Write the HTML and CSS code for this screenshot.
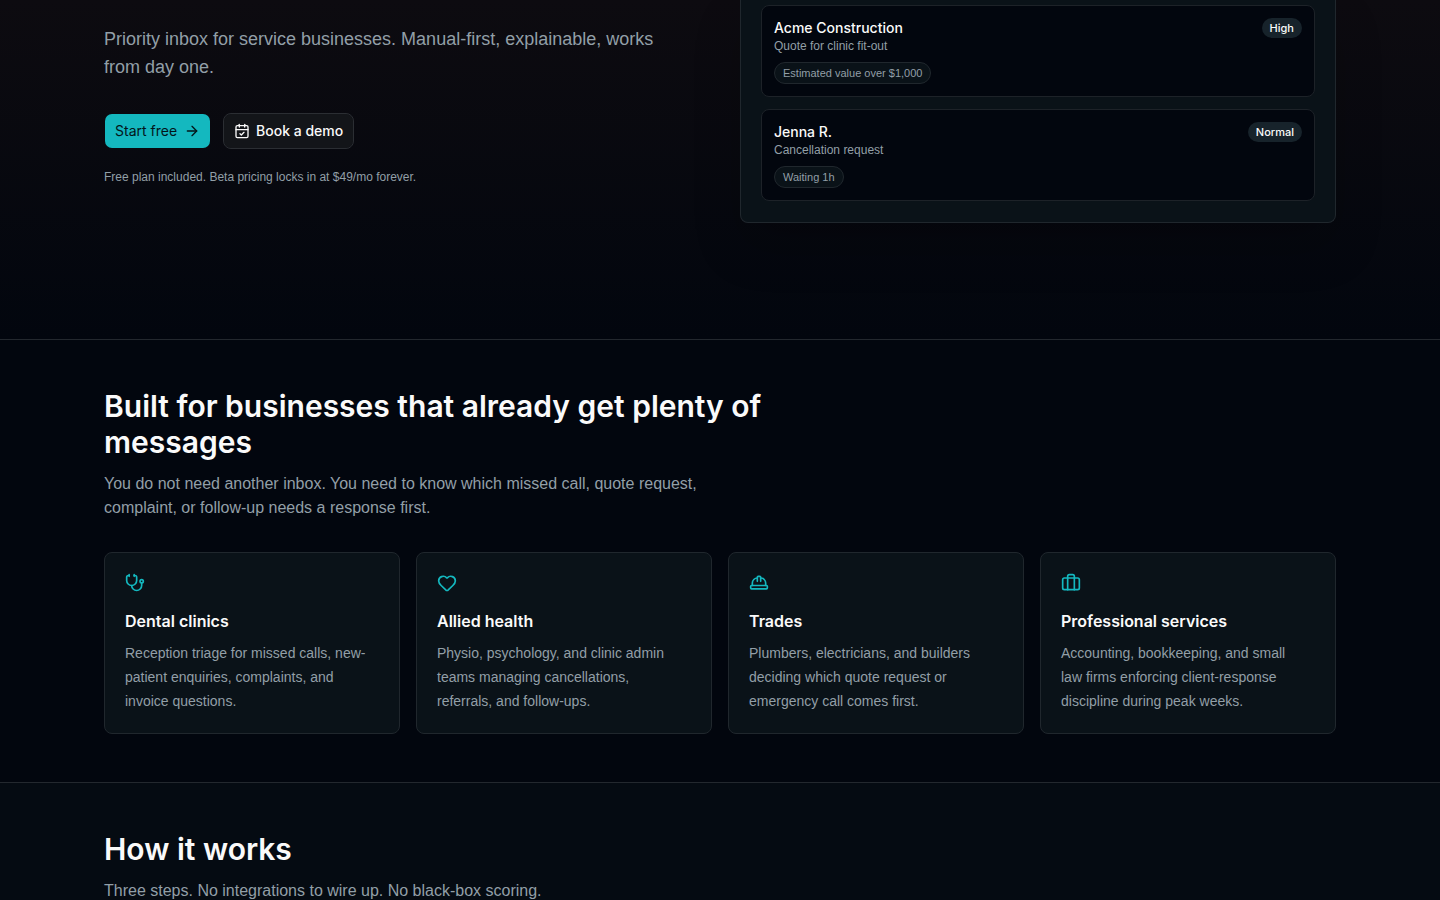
FILE: index.html
```html
<!DOCTYPE html>
<html lang="en">
<head>
  <meta charset="UTF-8">
  <meta name="viewport" content="width=device-width, initial-scale=1.0">
  <title>Priority inbox for service businesses</title>
  <link rel="stylesheet" href="styles.css">
</head>
<body>
  <!-- Hero -->
  <section class="hero">
    <div class="container hero-grid">
      <div class="hero-copy">
        <p class="hero-text">Priority inbox for service businesses. Manual-first, explainable, works from day one.</p>
        <div class="hero-actions">
          <a class="btn btn-primary" href="#">
            Start free
            <svg class="btn-icon" viewBox="0 0 24 24"><path d="M5 12h14"/><path d="m12 5 7 7-7 7"/></svg>
          </a>
          <a class="btn btn-outline" href="#">
            <svg class="btn-icon" viewBox="0 0 24 24"><path d="M8 2v4"/><path d="M16 2v4"/><rect width="18" height="18" x="3" y="4" rx="2"/><path d="M3 10h18"/><path d="m9 16 2 2 4-4"/></svg>
            Book a demo
          </a>
        </div>
        <p class="hero-note">Free plan included. Beta pricing locks in at $49/mo forever.</p>
      </div>

      <!-- Queue preview -->
      <div class="queue">
        <article class="queue-item">
          <div class="queue-head">
            <div>
              <p class="queue-name">Acme Construction</p>
              <p class="queue-subject">Quote for clinic fit-out</p>
            </div>
            <span class="badge">High</span>
          </div>
          <span class="reason">Estimated value over $1,000</span>
        </article>
        <article class="queue-item">
          <div class="queue-head">
            <div>
              <p class="queue-name">Jenna R.</p>
              <p class="queue-subject">Cancellation request</p>
            </div>
            <span class="badge">Normal</span>
          </div>
          <span class="reason">Waiting 1h</span>
        </article>
      </div>
    </div>
  </section>

  <!-- Industries -->
  <section class="section">
    <div class="container">
      <div class="section-intro">
        <h2>Built for businesses that already get plenty of messages</h2>
        <p>You do not need another inbox. You need to know which missed call, quote request, complaint, or follow-up needs a response first.</p>
      </div>
      <div class="card-grid">
        <article class="card">
          <svg class="card-icon" viewBox="0 0 24 24"><path d="M11 2v2"/><path d="M5 2v2"/><path d="M5 3H4a2 2 0 0 0-2 2v4a6 6 0 0 0 12 0V5a2 2 0 0 0-2-2h-1"/><path d="M8 15a6 6 0 0 0 12 0v-3"/><circle cx="20" cy="10" r="2"/></svg>
          <h3>Dental clinics</h3>
          <p>Reception triage for missed calls, new-patient enquiries, complaints, and invoice questions.</p>
        </article>
        <article class="card">
          <svg class="card-icon" viewBox="0 0 24 24"><path d="M2 9.5a5.5 5.5 0 0 1 9.591-3.676.56.56 0 0 0 .818 0A5.49 5.49 0 0 1 22 9.5c0 2.29-1.5 4-3 5.5l-5.492 5.313a2 2 0 0 1-3 .019L5 15c-1.5-1.5-3-3.2-3-5.5"/></svg>
          <h3>Allied health</h3>
          <p>Physio, psychology, and clinic admin teams managing cancellations, referrals, and follow-ups.</p>
        </article>
        <article class="card">
          <svg class="card-icon" viewBox="0 0 24 24"><path d="M10 10V5a1 1 0 0 1 1-1h2a1 1 0 0 1 1 1v5"/><path d="M14 6a6 6 0 0 1 6 6v3"/><path d="M4 15v-3a6 6 0 0 1 6-6"/><rect x="2" y="15" width="20" height="4" rx="1"/></svg>
          <h3>Trades</h3>
          <p>Plumbers, electricians, and builders deciding which quote request or emergency call comes first.</p>
        </article>
        <article class="card">
          <svg class="card-icon" viewBox="0 0 24 24"><path d="M16 20V4a2 2 0 0 0-2-2h-4a2 2 0 0 0-2 2v16"/><rect width="20" height="14" x="2" y="6" rx="2"/></svg>
          <h3>Professional services</h3>
          <p>Accounting, bookkeeping, and small law firms enforcing client-response discipline during peak weeks.</p>
        </article>
      </div>
    </div>
  </section>

  <!-- How it works -->
  <section class="section section-muted">
    <div class="container">
      <div class="section-intro">
        <h2>How it works</h2>
        <p>Three steps. No integrations to wire up. No black-box scoring.</p>
      </div>
    </div>
  </section>
</body>
</html>
```
FILE: styles.css
```css
/* Reset and Base Styles */
* {
  margin: 0;
  padding: 0;
  box-sizing: border-box;
}

body {
  background-color: #02060e;
  color: #fafafa;
  font-family: "Liberation Sans", Arial, sans-serif;
  font-size: 16px;
  line-height: 24px;
}

h2,
h3,
.btn,
.queue-name,
.badge {
  font-family: Inter, "Liberation Sans", sans-serif;
}

svg {
  fill: none;
  stroke: currentColor;
  stroke-width: 2;
  stroke-linecap: round;
  stroke-linejoin: round;
  flex-shrink: 0;
}

.container {
  max-width: 1280px;
  margin: 0 auto;
  padding: 0 24px;
}

/* Hero */
.hero {
  background: linear-gradient(to bottom, #0d0b10, #02060e);
  padding-bottom: 116px;
}

.hero-grid {
  display: grid;
  grid-template-columns: 1fr 1fr;
  gap: 40px;
}

.hero-copy {
  padding-top: 25px;
}

.hero-text {
  max-width: 576px;
  font-size: 18px;
  line-height: 28px;
  color: #929fa7;
}

.hero-actions {
  display: flex;
  flex-wrap: wrap;
  gap: 12px;
  margin-top: 32px;
}

.btn {
  display: inline-flex;
  align-items: center;
  gap: 6px;
  height: 36px;
  padding: 0 10px;
  border: 1px solid transparent;
  border-radius: 8px;
  background-clip: padding-box;
  font-size: 14px;
  font-weight: 500;
  text-decoration: none;
}

.btn-icon {
  width: 16px;
  height: 16px;
}

.btn-primary {
  gap: 7px;
  background-color: #14b8bf;
  color: #03161a;
  font-weight: 400;
}

.btn-outline {
  background-color: #131519;
  border-color: #2b2e33;
  color: #fafafa;
}

.hero-note {
  margin-top: 20px;
  font-size: 12px;
  line-height: 16px;
  color: #929fa7;
}

/* Queue preview */
.queue {
  display: flex;
  flex-direction: column;
  gap: 12px;
  padding: 5px 20px 21px;
  background: #0a1218;
  border: 1px solid #20272d;
  border-top: none;
  border-radius: 0 0 8px 8px;
  box-shadow: 0 24px 48px rgba(0, 0, 0, 0.2);
}

.queue-item {
  padding: 12px;
  background: #02060e;
  border: 1px solid #1d2228;
  border-radius: 8px;
}

.queue-head {
  display: flex;
  justify-content: space-between;
  align-items: flex-start;
  margin-bottom: 8px;
}

.queue-name {
  font-size: 14px;
  line-height: 20px;
  font-weight: 500;
}

.queue-subject {
  font-size: 12px;
  line-height: 16px;
  color: #929fa7;
}

.badge {
  padding: 2px 8px;
  border-radius: 10px;
  background: #17232b;
  font-size: 11px;
  line-height: 16px;
  font-weight: 500;
}

.reason {
  display: block;
  width: fit-content;
  padding: 2px 8px;
  border: 1px solid #20272d;
  border-radius: 11px;
  background: #0a1218;
  font-size: 11px;
  line-height: 16px;
  color: #929fa7;
}

/* Sections */
.section {
  padding: 48px 0;
  border-top: 1px solid #23282e;
}

.section-muted {
  background: #050b12;
}

.section-intro {
  max-width: 672px;
}

.section-intro h2 {
  font-size: 30px;
  line-height: 36px;
  font-weight: 600;
}

.section-intro p {
  max-width: 640px;
  margin-top: 12px;
  color: #929fa7;
}

/* Cards */
.card-grid {
  display: grid;
  grid-template-columns: repeat(4, 1fr);
  gap: 16px;
  margin-top: 32px;
}

.card {
  padding: 20px;
  background: #0a1218;
  border: 1px solid #20272d;
  border-radius: 8px;
}

.card-icon {
  display: block;
  width: 20px;
  height: 20px;
  color: #14b8bf;
}

.card h3 {
  margin-top: 16px;
  font-size: 16px;
  line-height: 24px;
  font-weight: 600;
}

.card p {
  margin-top: 8px;
  padding-right: 8px;
  font-size: 14px;
  color: #929fa7;
}

@media (max-width: 900px) {
  .hero-grid {
    grid-template-columns: 1fr;
  }

  .card-grid {
    grid-template-columns: 1fr 1fr;
  }
}
```
